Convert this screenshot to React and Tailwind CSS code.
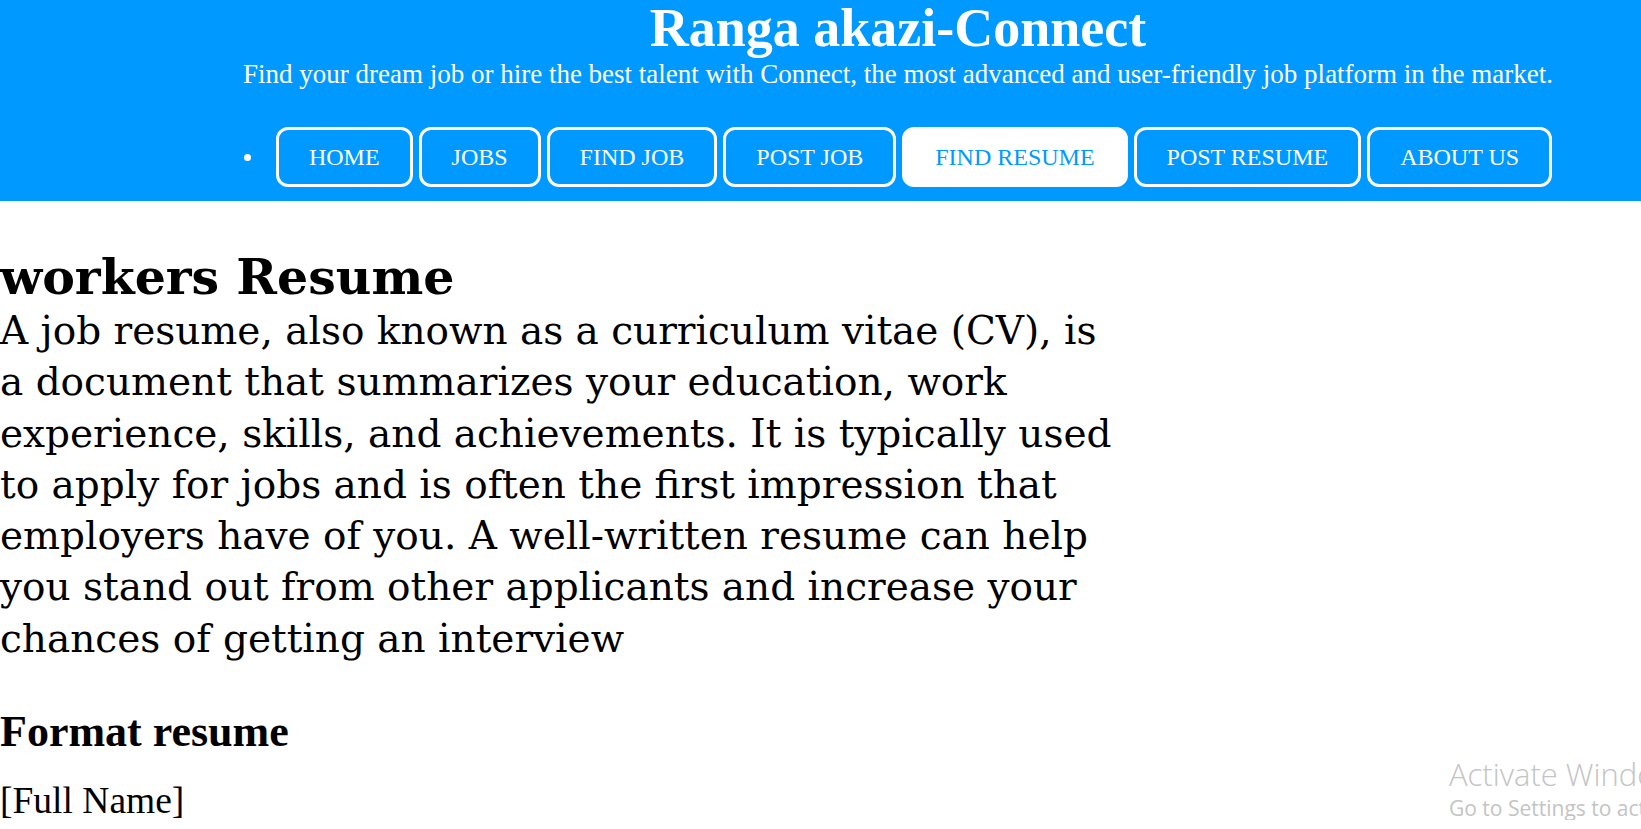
export default function App() {
  const links = ['HOME', 'JOBS', 'FIND JOB', 'POST JOB', 'FIND RESUME', 'POST RESUME', 'ABOUT US'];

  return (
    <div className="relative min-h-[829px] bg-white text-black">
      <header className="bg-[#0099ff] pb-[14px] pl-[155px] text-center text-white" style={{ fontFamily: '"Liberation Serif", serif' }}>
        <h1 className="text-[54px] font-bold leading-[56px]">Ranga akazi-Connect</h1>
        <p className="mt-[3px] text-[27px] leading-[30px]">
          Find your dream job or hire the best talent with Connect, the most advanced and user-friendly job platform in the market.
        </p>
        <nav className="mt-[38px] flex items-center justify-center">
          <span className="mr-[25px] h-[7px] w-[7px] rounded-full bg-white" />
          <ul className="flex gap-[6px]">
            {links.map((l) => (
              <li key={l}>
                <a
                  href="#"
                  className={
                    l === 'FIND RESUME'
                      ? 'block rounded-[12px] border-[3px] border-white bg-white px-[30px] py-[13px] text-[24px] leading-[28px] text-[#0099ff]'
                      : 'block rounded-[12px] border-[3px] border-white px-[30px] py-[13px] text-[24px] leading-[28px] text-white'
                  }
                >
                  {l}
                </a>
              </li>
            ))}
          </ul>
        </nav>
      </header>

      <main>
        <section style={{ fontFamily: '"DejaVu Serif", serif' }}>
          <h2 className="mt-[48px] text-[49px] font-bold leading-[56px]">workers Resume</h2>
          <p className="w-[1115px] text-[39px] leading-[51.3px]">
            A job resume, also known as a curriculum vitae (CV), is a document that summarizes your education, work
            experience, skills, and achievements. It is typically used to apply for jobs and is often the first
            impression that employers have of you. A well-written resume can help you stand out from other applicants
            and increase your chances of getting an interview
          </p>
        </section>

        <section style={{ fontFamily: '"Liberation Serif", serif' }}>
          <h3 className="mt-[43px] text-[44px] font-bold leading-[50px]">Format resume</h3>
          <p className="mt-[23px] text-[37.5px] leading-[42px]">[Full Name]</p>
        </section>
      </main>

      {/* windows watermark, clipped at the right edge like in the screenshot */}
      <div className="pointer-events-none absolute left-[1449px] right-0 top-[757px] overflow-hidden whitespace-nowrap text-[#c4c4c4]" style={{ fontFamily: '"Open Sans", sans-serif' }}>
        <div className="text-[31px] font-light leading-[34px]">Activate Windows</div>
        <div className="mt-[5px] text-[21px] leading-[24px]">Go to Settings to activate Windows.</div>
      </div>
    </div>
  );
}
